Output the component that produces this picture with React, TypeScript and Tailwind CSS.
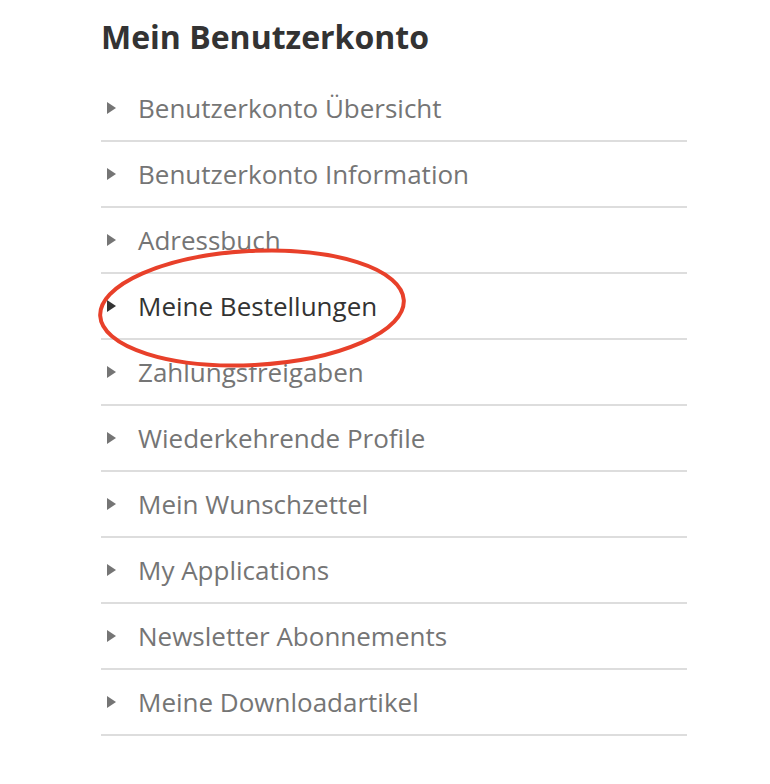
const ITEMS = [
  'Benutzerkonto Übersicht',
  'Benutzerkonto Information',
  'Adressbuch',
  'Meine Bestellungen',
  'Zahlungsfreigaben',
  'Wiederkehrende Profile',
  'Mein Wunschzettel',
  'My Applications',
  'Newsletter Abonnements',
  'Meine Downloadartikel',
]

const ACTIVE = 'Meine Bestellungen'

export default function App() {
  return (
    <div
      className="min-h-[784px] w-[770px] bg-white"
      style={{ fontFamily: '"Open Sans", "Noto Sans", sans-serif' }}
    >
      <div className="relative ml-[101px] w-[586px] pt-[16px]">
        <h2 className="text-[32px] font-bold leading-[42px] text-[#333]">Mein Benutzerkonto</h2>

        <ul className="mt-[18px]">
          {ITEMS.map((item) => {
            const active = item === ACTIVE
            return (
              <li
                key={item}
                className="flex h-[66px] items-center border-b-2 border-[#dddddd]"
              >
                <svg
                  className={`ml-[6px] h-[12px] w-[9px] shrink-0 ${active ? 'text-[#333]' : 'text-[#757575]'}`}
                  viewBox="0 0 9 12"
                  fill="currentColor"
                >
                  <path d="M0 0 L9 6 L0 12 Z" />
                </svg>
                <span
                  className={`ml-[22px] text-[26px] leading-none ${active ? 'text-[#333]' : 'text-[#757575]'}`}
                >
                  {item}
                </span>
              </li>
            )
          })}
        </ul>

        {/* red marker circled around the orders link */}
        <svg
          className="pointer-events-none absolute left-[-6px] top-[246px]"
          width="320"
          height="130"
          viewBox="0 0 320 130"
          fill="none"
        >
          <ellipse
            cx="157"
            cy="62"
            rx="152"
            ry="57"
            stroke="#e8402a"
            strokeWidth="4"
            transform="rotate(-3 157 62)"
          />
        </svg>
      </div>
    </div>
  )
}
